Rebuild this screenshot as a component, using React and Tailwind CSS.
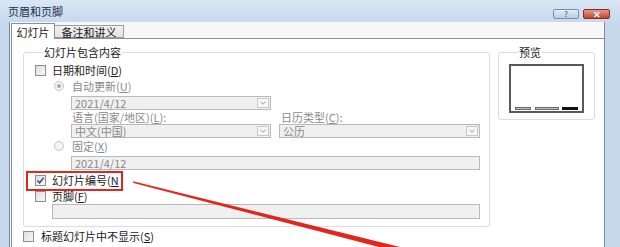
const font = { fontFamily: '"Noto Sans CJK SC", "Liberation Sans", sans-serif' };

function CheckBox({ checked }) {
  return (
    <span className="flex h-[11px] w-[11px] shrink-0 items-center justify-center border border-[#8f8f8f] bg-gradient-to-br from-[#dedede] to-[#f8f8f8]">
      {checked && (
        <svg width="9" height="9" viewBox="0 0 9 9">
          <path d="M1.5 4.5 L3.6 6.8 L7.6 1.8" fill="none" stroke="#2e4a7e" strokeWidth="1.4" />
        </svg>
      )}
    </span>
  );
}

function Radio({ selected }) {
  return (
    <span className="flex h-[10px] w-[10px] shrink-0 items-center justify-center rounded-full border border-[#c4c4c4] bg-[#f4f4f4]">
      {selected && <span className="h-[4px] w-[4px] rounded-full bg-[#a8a8a8]" />}
    </span>
  );
}

function Select({ value, width }) {
  return (
    <div
      className="flex h-[14px] items-center justify-between border border-[#b9b9b9] bg-[#f0f0f0] pl-[3px] pr-[1px] text-[11px] leading-[12px] text-[#8a8a8a]"
      style={{ width }}
    >
      <span>{value}</span>
      <span className="flex h-[10px] w-[12px] items-center justify-center border border-[#c8c8c8] bg-[#f7f7f7]">
        <svg width="6" height="4" viewBox="0 0 6 4">
          <path d="M0.5 0.8 L3 3.2 L5.5 0.8" fill="none" stroke="#9a9a9a" strokeWidth="1" />
        </svg>
      </span>
    </div>
  );
}

function Row({ children, className = "" }) {
  return <div className={`flex h-[14px] items-center text-[11px] leading-[14px] ${className}`}>{children}</div>;
}

export default function App() {
  return (
    <div className="relative flex h-[247px] w-[620px] flex-col overflow-hidden bg-[#c6d8ec]" style={font}>
      {/* title bar */}
      <div className="flex h-[22px] shrink-0 items-start justify-between bg-gradient-to-b from-[#d9e6f4] to-[#c7d9ed] pl-[8px] pr-[10px]">
        <span className="mt-[4px] text-[11px] leading-[14px] text-[#1e2f4a]">页眉和页脚</span>
        <div className="mt-[9px] flex gap-[4px]">
          <div className="flex h-[10px] w-[26px] items-center justify-center rounded-[2px] border border-[#7a8ea8] bg-gradient-to-b from-[#e4edf7] to-[#b9cde4] text-[8px] leading-none text-[#3a4a60]">
            ?
          </div>
          <div className="flex h-[10px] w-[27px] items-center justify-center rounded-[2px] border border-[#8a2a22] bg-gradient-to-b from-[#e39a8c] to-[#c4412f] text-[9px] font-bold leading-none text-white">
            ✕
          </div>
        </div>
      </div>

      {/* client area */}
      <div className="ml-[9px] mr-[15px] flex-1 border-l border-r border-[#7d8a9c] bg-[#f7f7f7] pl-[1px] pt-[1px]">
        {/* tabs */}
        <div className="relative z-10 flex h-[15px] items-end text-[11px] leading-[12px]">
          <div className="-mb-px flex h-[16px] w-[44px] items-center justify-center border border-b-0 border-[#8c8f96] bg-white text-[#1a1a1a]">
            幻灯片
          </div>
          <div className="flex h-[13px] w-[69px] items-center justify-center border border-l-0 border-[#9a9da3] bg-gradient-to-b from-[#f2f2f2] to-[#e2e2e2] text-[#1a1a1a]">
            备注和讲义
          </div>
        </div>

        {/* panel */}
        <div className="h-[220px] border-l border-t border-[#8c8f96] bg-white pt-[6px]">
          <div className="flex items-start gap-[8px] pl-[11px]">
            <fieldset className="w-[467px] rounded-[3px] border border-[#d8dde2] pb-[7px] pl-[11px]">
              <legend className="ml-[8px] px-[1px] text-[11px] leading-[14px] text-[#1a1a1a]">幻灯片包含内容</legend>

              <Row className="mt-[4px] gap-[6px] text-[#1a1a1a]">
                <CheckBox />
                <span>
                  日期和时间(<u>D</u>)
                </span>
              </Row>

              <Row className="ml-[19px] mt-[2px] gap-[8px] text-[#8a8a8a]">
                <Radio selected />
                <span>
                  自动更新(<u>U</u>)
                </span>
              </Row>

              <div className="ml-[36px] mt-[3px]">
                <Select value="2021/4/12" width={200} />
              </div>

              <div className="ml-[37px] mt-[1px] flex h-[12px] items-center text-[11px] leading-[12px] text-[#8a8a8a]">
                <span className="w-[209px]">
                  语言(国家/地区)(<u>L</u>):
                </span>
                <span>
                  日历类型(<u>C</u>):
                </span>
              </div>

              <div className="ml-[36px] mt-[1px] flex gap-[8px]">
                <Select value="中文(中国)" width={200} />
                <Select value="公历" width={201} />
              </div>

              <Row className="ml-[19px] mt-[1px] gap-[8px] text-[#8a8a8a]">
                <Radio />
                <span>
                  固定(<u>X</u>)
                </span>
              </Row>

              <div className="ml-[36px] mt-[3px] flex h-[14px] w-[409px] items-center border border-[#b9b9b9] bg-[#f0f0f0] pl-[3px] text-[11px] leading-[12px] text-[#8a8a8a]">
                2021/4/12
              </div>

              <Row className="mt-[3px] gap-[6px] text-[#1a1a1a]">
                <CheckBox checked />
                <span>
                  幻灯片编号(<u>N</u>
                </span>
              </Row>

              <Row className="mt-[2px] gap-[6px] text-[#1a1a1a]">
                <CheckBox />
                <span>
                  页脚(<u>F</u>)
                </span>
              </Row>

              <div className="ml-[17px] mt-[1px] h-[15px] w-[428px] border border-[#b9b9b9] bg-[#f0f0f0]" />
            </fieldset>

            <fieldset className="h-[75px] w-[97px] rounded-[3px] border border-[#d8dde2] pl-[10px]">
              <legend className="ml-[9px] px-[1px] text-[11px] leading-[14px] text-[#1a1a1a]">预览</legend>
              <div className="mt-[5px] flex h-[49px] w-[75px] flex-col justify-end border-2 border-[#5a5a5a] bg-white pb-[1px]">
                <div className="flex items-center justify-between px-[4px]">
                  <span className="h-[3px] w-[16px] border border-[#6a6a6a] bg-[#bdbdbd]" />
                  <span className="h-[3px] w-[24px] border border-[#6a6a6a] bg-[#bdbdbd]" />
                  <span className="h-[3px] w-[16px] bg-[#111]" />
                </div>
              </div>
            </fieldset>
          </div>

          <Row className="ml-[11px] mt-[2px] gap-[7px] text-[#1a1a1a]">
            <CheckBox />
            <span>
              标题幻灯片中不显示(<u>S</u>)
            </span>
          </Row>
        </div>
      </div>

      {/* annotation: red highlight box */}
      <div className="absolute left-[26px] top-[171px] h-[20px] w-[97px] border-2 border-[#e3261d]" />

      {/* annotation: red arrow */}
      <svg className="pointer-events-none absolute left-0 top-0" width="620" height="247" viewBox="0 0 620 247">
        <polygon points="133,181.3 133.5,183 400,252.5 400,247" fill="#e3261d" />
      </svg>
    </div>
  );
}
